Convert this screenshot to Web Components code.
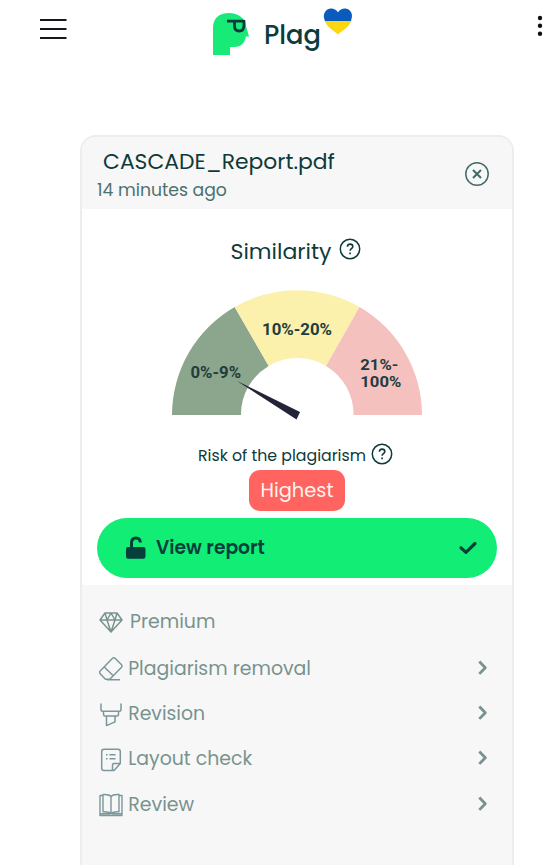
<!DOCTYPE html>
<html lang="en">
<head>
<meta charset="utf-8">
<title>Plag</title>
<style>
html,body{margin:0;background:#fff}
body{font-family:Poppins,Inter,"Liberation Sans",sans-serif;color:#0f3a3a;height:865px;overflow:hidden}
</style>
</head>
<body>
<plag-page></plag-page>
<script>
const define = (name, html, setup) => customElements.define(name, class extends HTMLElement {
  connectedCallback() {
    if (this.shadowRoot) return;
    const t = document.createElement('template');
    t.innerHTML = html;
    this.attachShadow({mode: 'open'}).append(t.content.cloneNode(true));
    if (setup) setup(this, this.shadowRoot);
  }
});

/* One line of text whose size is scaled to fill a given width. */
define('fit-text', `<style>:host{display:block;white-space:nowrap;flex:none}span{display:inline-block}</style><span><slot></slot></span>`, (el, root) => {
  const w = +el.getAttribute('w'), s = root.querySelector('span'), size = +el.getAttribute('size');
  el.style.fontSize = size + 'px';
  el.style.width = w + 'px';
  el.style.fontSize = size * w / s.getBoundingClientRect().width + 'px';
});

const icons = {
  menu: [27, 22, `<g stroke="#17171b" stroke-width="2"><path d="M0 2H26.500M0 11H26.500M0 20H26.500"/></g>`],
  dots: [6, 22, `<g fill="#111" stroke="none"><circle cx="3" cy="3" r="2.200"/><circle cx="3" cy="10.800" r="2.200"/><circle cx="3" cy="18.800" r="2.200"/></g>`],
  logo: [37, 44, `<path d="M0 43V16C0 6 6.500 1 16 1c9 0 16 5 17 13l3 10.500h-3.200c-.8 6.500-5 10.500-11.500 10.500H17v8z" fill="#17ea76" stroke="none"/><path d="M14 9.200H31v3.800c0 4-1.800 6-4.800 6-3.100 0-4.700-2-4.700-5V9.500" stroke="#0b3b3c" stroke-width="2.800"/>`],
  heart: [30, 28, `<path d="M15 4.200C17.200 1.200 20.500 0 23.500.8 28.300 2 30 7 28.400 11.200L28 13H2L1.300 11C0 7 1.700 2 6.500.8 9.500 0 12.800 1.200 15 4.200Z" fill="#0a5bbb" stroke="none"/><path d="M1.800 13H28.200C26 19 20.500 22 15 26.500 9.500 22 4 19 1.800 13Z" fill="#fcd611" stroke="none"/>`],
  close: [26, 26, `<circle cx="13" cy="13" r="11.200" stroke-width="1.500"/><path d="M9 9l8 8M17 9l-8 8" stroke-width="2"/>`],
  help: [22, 22, `<circle cx="11" cy="11" r="9.700" stroke-width="1.500"/><path d="M8.400 8.800c0-1.700 1.200-2.700 2.700-2.700s2.700 1 2.700 2.500c0 2.100-2.700 2-2.700 4.200" stroke-width="1.600"/><path d="M11.100 14.500v1.700" stroke-width="1.700"/>`],
  lock: [20, 24, `<rect x="0" y="11" width="19.500" height="11.800" rx="2.200" fill="currentColor" stroke="none"/><path d="M5.500 12V7c0-3 1.700-5 4.400-5s4.400 1.700 4.400 4.500" stroke-width="3"/>`],
  check: [20, 16, `<path d="M3 7.800L7.900 12.400 17 3.500" stroke-width="3.200" stroke-linecap="round"/>`],
  gem: [24, 22, `<path d="M6 1h12l5 7-11 12L1 8zM1 8h22M6 1l2 7 4 12 4-12 2-7M8 8l4-7 4 7" stroke-width="1.500"/>`],
  eraser: [24, 24, `<path d="M13.300 1.500c1-1 2-1 3 0l6 6c1 1 1 2 0 3L10.800 22.300H6.500L1.400 17c-1-1-1-2.300 0-3.300zM5.300 10l9.200 9M8 22.700h13" stroke-width="1.500"/>`],
  marker: [24, 24, `<path d="M2 .5v6.200c0 1 .6 1.500 1.500 1.500h17c.9 0 1.500-.5 1.500-1.500V.5M4.500 8.200v3.300c0 1 .5 1.500 1.500 1.500h12c1 0 1.500-.5 1.500-1.500V8.200M7.500 13v9.600l8.500-3.700V13" stroke-width="1.500"/>`],
  note: [24, 24, `<path d="M5 1.300h14c1.500 0 2.300.8 2.300 2.300v12L15 22.500H5c-1.500 0-2.300-.8-2.300-2.300V3.600C2.700 2.100 3.500 1.300 5 1.300zM21.300 15.500H15c-1 0-1.500.5-1.500 1.500v5.500M7 6.800h1.500M10.500 6.800h6M7 10.800h1.500M10.500 10.800h6" stroke-width="1.500"/>`],
  book: [24, 24, `<path d="M12 3.500C10.500 1.700 7 1.300 4 1.500v17.300c3-.2 6.500.2 8 2 1.500-1.800 5-2.200 8-2V1.500c-3-.2-6.500.2-8 2zM12 3.500v17.300M4 2.500H1v20h22v-20h-3M1 20.800h10M13 20.800h10" stroke-width="1.400"/>`],
  chevron: [12, 16, `<path d="M2.300 1.500l6 6.200-6 6.200" stroke-width="2.800"/>`]
};
define('ui-icon', `<style>:host{display:block;flex:none}svg{display:block;overflow:visible}</style><svg fill="none" stroke="currentColor" stroke-linejoin="round"></svg>`, (el, root) => {
  const [w, h, body] = icons[el.getAttribute('name')], svg = root.querySelector('svg');
  svg.setAttribute('viewBox', `0 0 ${w} ${h}`);
  svg.setAttribute('width', w);
  svg.setAttribute('height', h);
  svg.innerHTML = body;
});

define('top-bar', `<style>
:host{display:flex;height:135px;box-sizing:border-box;align-items:flex-start}
.menu{margin:18px 0 0 40px}.logo{margin:12px 0 0 146px}
fit-text{font-weight:500;line-height:34px;margin:18px 0 0 14px;color:#0b3b3c}
.heart{margin:8px 0 0 2px}.dots{margin:15px 0 0 183.500px}
</style><ui-icon class="menu" name="menu"></ui-icon><ui-icon class="logo" name="logo"></ui-icon><fit-text w="57" size="26">Plag</fit-text><ui-icon class="heart" name="heart"></ui-icon><ui-icon class="dots" name="dots"></ui-icon>`);

define('risk-gauge', `<style>:host{display:block;width:250px;height:130px}svg{display:block;overflow:visible}text{font:700 16px Roboto,sans-serif;fill:#213d3d}.two{font-size:14.500px}</style>
<svg width="250" height="130" viewBox="172 290 250 130">
<path d="M172 415A125 125 0 0 1 234.700 307L268.700 366A56 56 0 0 0 241 415Z" fill="#8ca68d"/>
<path d="M234.700 307A125 125 0 0 1 359.500 307L326 366A56 56 0 0 0 268.700 366Z" fill="#fcf1ac"/>
<path d="M359.500 307A125 125 0 0 1 422 415H353.500A56 56 0 0 0 326 366Z" fill="#f4c1bf"/>
<path d="M237 381L300 412 296.500 419.500Z" fill="#242438"/>
<text x="262" y="334.500" textLength="70" lengthAdjust="spacingAndGlyphs">10%-20%</text>
<text x="190.500" y="378.300" textLength="50.500" lengthAdjust="spacingAndGlyphs">0%-9%</text>
<text class="two" x="360.300" y="369.500" textLength="38" lengthAdjust="spacingAndGlyphs">21%-</text>
<text class="two" x="360.300" y="386.700" textLength="41" lengthAdjust="spacingAndGlyphs">100%</text></svg>`);

define('file-header', `<style>
:host{display:flex;justify-content:space-between;height:72px;background:#f7f7f7;padding:0 22px 0 15px}
.t{line-height:28px;margin:11px 0 0 6px;color:#0f3a3a}.s{line-height:24px;margin-top:2px;color:#4c7170}
ui-icon{margin-top:24px;color:#3f6b69}
</style><div><fit-text class="t" w="232" size="22">CASCADE_Report.pdf</fit-text><fit-text class="s" w="130" size="17">14 minutes ago</fit-text></div><ui-icon name="close"></ui-icon>`);

define('view-button', `<style>
:host{display:flex;align-items:center;box-sizing:border-box;width:400px;height:60px;border-radius:30px;background:#12ed76;padding:0 19px 0 29px;color:#073f3d}
fit-text{font-weight:600;line-height:28px;margin-left:10px}.c{margin-left:auto;margin-top:-1px}.l{margin-top:-1px}
</style><ui-icon class="l" name="lock"></ui-icon><fit-text w="109" size="18">View report</fit-text><ui-icon class="c" name="check"></ui-icon>`);

define('service-row', `<style>
:host{display:flex;align-items:center;height:45.400px;color:#78938f}
:host([lead]){height:48px}
fit-text{line-height:28px;margin:1px 0 0 5.200px}:host([lead]) fit-text{margin:0 0 0 7px}
.c{margin-left:auto;margin-top:-1px;margin-right:1px}.i{color:#7b979b;margin-top:2px}:host([lead]) .i{color:#78938f}
</style>`, (el, root) => {
  const lead = el.hasAttribute('lead');
  root.innerHTML += `<ui-icon class="i" name="${el.getAttribute('icon')}"></ui-icon><fit-text w="${el.getAttribute('w')}" size="19">${el.getAttribute('label')}</fit-text>` + (lead ? '' : '<ui-icon class="c" name="chevron"></ui-icon>');
});

define('report-card', `<style>
:host{display:block;box-sizing:border-box;width:434px;height:760px;margin-left:80px;border:2px solid #ededed;border-radius:16px;overflow:hidden;background:#fff}
.main{height:376px;display:flex;flex-direction:column;align-items:center}
.row{display:flex;align-items:center}
.sim{height:30px;margin:27px 3px 0 0;gap:7px}.sim ui-icon{margin-top:-4px}
risk-gauge{margin-top:24px}
.risk{height:24px;margin:23px 3px 0 0;gap:5px}.risk ui-icon{margin-top:-2px}
.badge{width:96px;height:41px;margin-top:3px;border-radius:11px;background:#ff6461;color:#fff3ee;display:flex;align-items:center;justify-content:center}
view-button{margin-top:7px}
.list{background:#f7f7f7;height:300px;padding:12.500px 22px 0 17px}
</style>
<file-header></file-header>
<div class="main">
<div class="row sim"><fit-text w="101" size="22">Similarity</fit-text><ui-icon name="help"></ui-icon></div>
<risk-gauge></risk-gauge>
<div class="row risk"><fit-text w="168" size="15.500">Risk of the plagiarism</fit-text><ui-icon name="help"></ui-icon></div>
<div class="badge"><fit-text w="73" size="19">Highest</fit-text></div>
<view-button></view-button>
</div>
<div class="list">
<service-row lead icon="gem" w="85.500" label="Premium"></service-row>
<service-row icon="eraser" w="183" label="Plagiarism removal"></service-row>
<service-row icon="marker" w="77" label="Revision"></service-row>
<service-row icon="note" w="124" label="Layout check"></service-row>
<service-row icon="book" w="66" label="Review"></service-row>
</div>`);

define('plag-page', `<style>:host{display:block;width:555px;height:865px;overflow:hidden}</style><top-bar></top-bar><report-card></report-card>`);
</script>
</body>
</html>
